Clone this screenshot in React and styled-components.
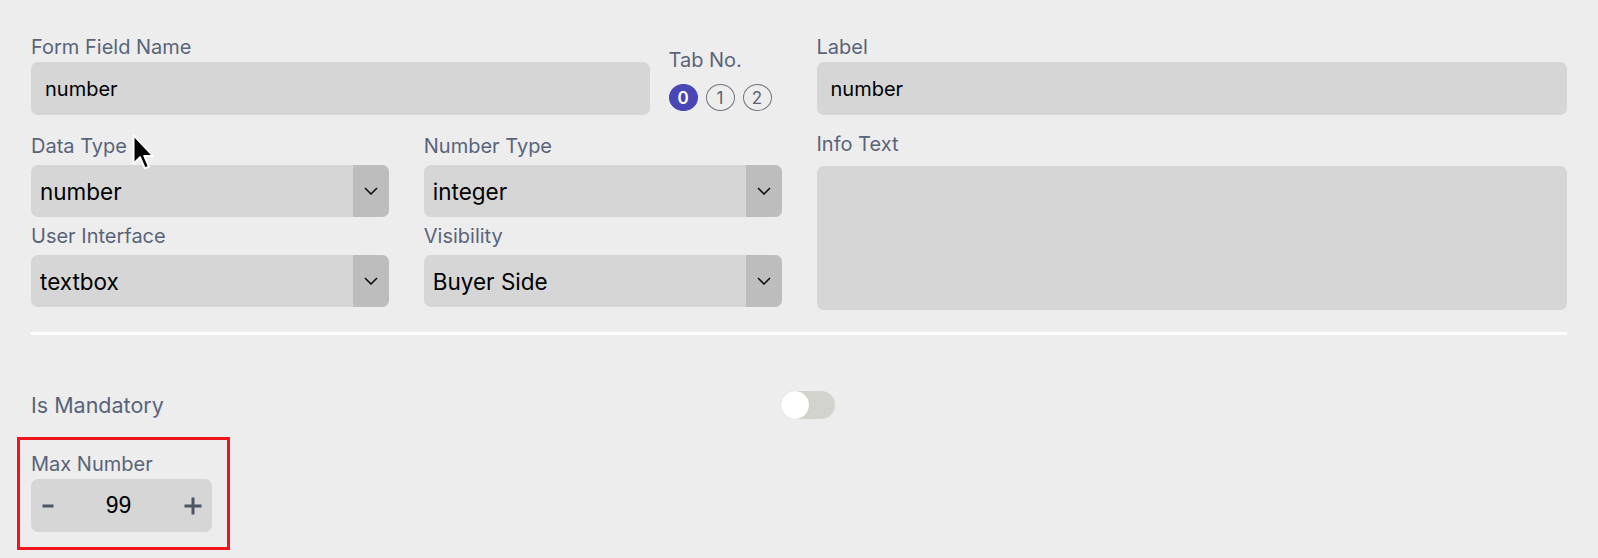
import styled, { createGlobalStyle } from "styled-components";

const GlobalStyle = createGlobalStyle`
  html, body {
    margin: 0;
    padding: 0;
    background: #ededed;
    font-family: Inter, "Liberation Sans", sans-serif;
  }
  * {
    box-sizing: border-box;
  }
`;

const Page = styled.div`
  position: relative;
  padding: 35px 31px 0;
  background: #ededed;
`;

const TopGrid = styled.div`
  display: grid;
  grid-template-columns: 1fr 1fr;
  column-gap: 35px;
`;

const Column = styled.div`
  display: flex;
  flex-direction: column;
`;

const FirstRow = styled.div`
  display: flex;
  align-items: flex-start;
`;

const Field = styled.div`
  display: flex;
  flex-direction: column;
  flex: ${(props) => (props.grow ? 1 : "none")};
  margin-top: ${(props) => props.top || 0}px;
`;

const Label = styled.label`
  display: block;
  font-size: 20px;
  line-height: 24px;
  color: #59647a;
  margin-bottom: ${(props) => props.gap || 3}px;
`;

const TextInput = styled.input`
  height: 53px;
  width: 100%;
  border: none;
  outline: none;
  border-radius: 7px;
  background: #d6d6d6;
  padding: 0 14px;
  font-family: Inter, "Liberation Sans", sans-serif;
  font-size: 20px;
  color: #000;
`;

const TextArea = styled.textarea`
  height: 144px;
  width: 100%;
  border: none;
  outline: none;
  resize: none;
  border-radius: 7px;
  background: #d6d6d6;
  padding: 12px 14px;
  font-family: Inter, "Liberation Sans", sans-serif;
  font-size: 20px;
`;

const TabField = styled.div`
  display: flex;
  flex-direction: column;
  margin: 0 10px 0 19px;
  padding-top: 13px;
`;

const TabList = styled.div`
  display: flex;
  gap: 8px;
  margin-top: 9px;
`;

const TabDot = styled.button`
  width: 29px;
  height: 27px;
  border-radius: 50%;
  padding: 0;
  display: flex;
  align-items: center;
  justify-content: center;
  font-family: Inter, "Liberation Sans", sans-serif;
  font-size: 17px;
  border: 1px solid ${(props) => (props.active ? "#4a46b6" : "#6f7480")};
  background: ${(props) => (props.active ? "#4a46b6" : "transparent")};
  color: ${(props) => (props.active ? "#fff" : "#5d6372")};
  font-weight: ${(props) => (props.active ? 600 : 400)};
`;

const SelectGrid = styled.div`
  display: grid;
  grid-template-columns: 1fr 1fr;
  column-gap: 35px;
  row-gap: 7px;
  margin-top: 19px;
`;

const SelectBox = styled.div`
  height: 52px;
  display: flex;
  border-radius: 7px;
  overflow: hidden;
  background: #d6d6d6;
`;

const SelectValue = styled.div`
  flex: 1;
  display: flex;
  align-items: center;
  padding-left: 9px;
  font-size: 22.5px;
  color: #000;
`;

const ChevronBox = styled.div`
  width: 36px;
  display: flex;
  align-items: center;
  justify-content: center;
  background: #bdbdbd;
`;

const Divider = styled.div`
  height: 3px;
  background: #ffffff;
  margin-top: 22px;
`;

const ToggleRow = styled.div`
  display: flex;
  align-items: center;
  margin-top: 56px;
`;

const ToggleLabel = styled.span`
  width: 750px;
  font-size: 21.5px;
  color: #59647a;
`;

const Track = styled.button`
  width: 54px;
  height: 28px;
  border: none;
  padding: 0;
  border-radius: 14px;
  background: #d3d3cd;
  display: flex;
  align-items: center;
`;

const Knob = styled.span`
  width: 28px;
  height: 28px;
  border-radius: 50%;
  background: #fff;
  box-shadow: 0 0 1px rgba(0, 0, 0, 0.15);
`;

const Highlight = styled.div`
  width: 213px;
  margin-top: 18px;
  margin-left: -14px;
  border: 3px solid #f2141b;
  padding: 12px 15px 15px 11px;
`;

const Stepper = styled.div`
  height: 53px;
  display: flex;
  align-items: center;
  justify-content: space-between;
  background: #d6d6d6;
  border-radius: 7px;
  padding: 0 9px 0 7px;
`;

const StepButton = styled.button`
  border: none;
  background: none;
  padding: 0;
  display: flex;
  align-items: center;
  justify-content: center;
  width: 20px;
  height: 20px;
`;

const StepValue = styled.span`
  font-family: "Liberation Sans", Arial, sans-serif;
  font-size: 23px;
  color: #000;
  margin-right: 4px;
`;

const Cursor = styled.svg`
  position: absolute;
  left: 130px;
  top: 133px;
  pointer-events: none;
`;

function Chevron() {
  return (
    <svg width="14" height="8" viewBox="0 0 14 8">
      <path d="M1 1 L7 7 L13 1" fill="none" stroke="#111" strokeWidth="1.6" />
    </svg>
  );
}

function Select({ label, value }) {
  return (
    <Field>
      <Label gap={7}>{label}</Label>
      <SelectBox>
        <SelectValue>{value}</SelectValue>
        <ChevronBox>
          <Chevron />
        </ChevronBox>
      </SelectBox>
    </Field>
  );
}

export default function App() {
  return (
    <>
      <GlobalStyle />
      <Page>
        <TopGrid>
          <Column>
            <FirstRow>
              <Field grow>
                <Label>Form Field Name</Label>
                <TextInput defaultValue="number" />
              </Field>
              <TabField>
                <Label gap={0}>Tab No.</Label>
                <TabList>
                  <TabDot active>0</TabDot>
                  <TabDot>1</TabDot>
                  <TabDot>2</TabDot>
                </TabList>
              </TabField>
            </FirstRow>
            <SelectGrid>
              <Select label="Data Type" value="number" />
              <Select label="Number Type" value="integer" />
              <Select label="User Interface" value="textbox" />
              <Select label="Visibility" value="Buyer Side" />
            </SelectGrid>
          </Column>
          <Column>
            <Field>
              <Label>Label</Label>
              <TextInput defaultValue="number" />
            </Field>
            <Field top={17}>
              <Label gap={10}>Info Text</Label>
              <TextArea />
            </Field>
          </Column>
        </TopGrid>
        <Divider />
        <ToggleRow>
          <ToggleLabel>Is Mandatory</ToggleLabel>
          <Track>
            <Knob />
          </Track>
        </ToggleRow>
        <Highlight>
          <Label gap={3}>Max Number</Label>
          <Stepper>
            <StepButton>
              <svg width="12" height="4" viewBox="0 0 12 4">
                <rect x="0.5" y="0.5" width="11" height="3" fill="#4b5567" />
              </svg>
            </StepButton>
            <StepValue>99</StepValue>
            <StepButton>
              <svg width="18" height="18" viewBox="0 0 18 18">
                <path d="M9 0.5 V17.5 M0.5 9 H17.5" stroke="#4b5567" strokeWidth="3" />
              </svg>
            </StepButton>
          </Stepper>
        </Highlight>
        <Cursor width="26" height="40" viewBox="0 0 22 34">
          <path
            d="M3 2 L3 26 L8.5 20.5 L12.5 30 L16 28.5 L12 19.5 L19.5 19.5 Z"
            fill="#000"
            stroke="#fff"
            strokeWidth="1.6"
            strokeLinejoin="round"
          />
        </Cursor>
      </Page>
    </>
  );
}
